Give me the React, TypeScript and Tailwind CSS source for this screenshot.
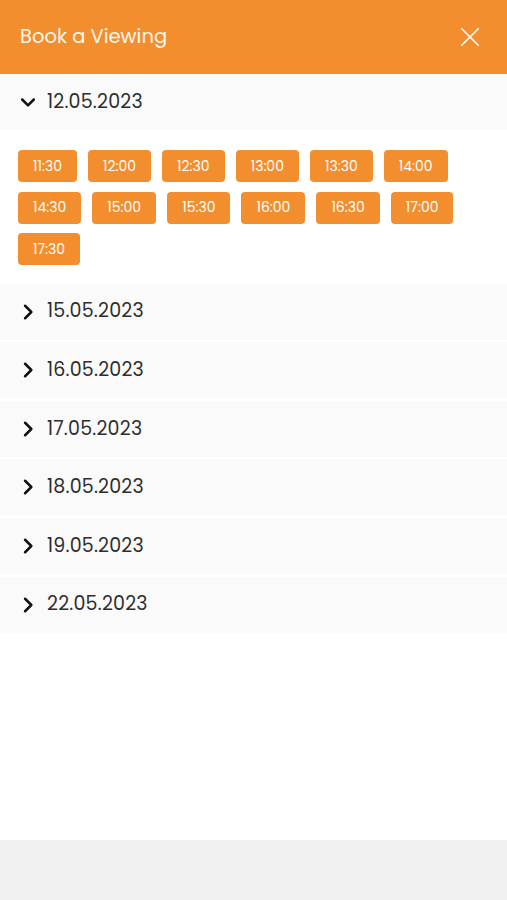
import React, { useState } from 'react';

const times = ['11:30', '12:00', '12:30', '13:00', '13:30', '14:00', '14:30', '15:00', '15:30', '16:00', '16:30', '17:00', '17:30'];
const dates = ['12.05.2023', '15.05.2023', '16.05.2023', '17.05.2023', '18.05.2023', '19.05.2023', '22.05.2023'];

const Chevron: React.FC<{ open: boolean }> = ({ open }) => (
  <svg width="20" height="20" viewBox="0 0 24 24" fill="none" stroke="#111" strokeWidth="3" strokeLinecap="round" strokeLinejoin="round">
    {open ? <path d="M5 9l7 7 7-7" /> : <path d="M8.5 4.5l7.5 7.5-7.5 7.5" />}
  </svg>
);

export default function App() {
  const [open, setOpen] = useState(0);

  return (
    <div className="h-[900px] w-full flex flex-col bg-white font-['Poppins','Open_Sans',sans-serif]">
      <div className="h-[74px] bg-[#f28e2e] flex items-center justify-between pl-5 pr-[26px] shrink-0">
        <span className="text-[#fdf6ee] text-[19.5px]">Book a Viewing</span>
        <svg width="22" height="22" viewBox="0 0 24 24" fill="none" stroke="#fff" strokeWidth="1.8" strokeLinecap="round">
          <path d="M3 3l18 18M21 3L3 21" />
        </svg>
      </div>

      <div className="flex-1 flex flex-col gap-[2.6px]">
        {dates.map((d, i) => (
          <div key={d}>
            <button
              onClick={() => setOpen(open === i ? -1 : i)}
              className="w-full h-[56px] bg-[#fafafa] flex items-center gap-[9px] pl-[18px] text-left"
            >
              <Chevron open={open === i} />
              <span className="text-[19px] text-[#2e2e2e] tracking-[0.2px]">{d}</span>
            </button>
            {open === i && (
              <div className="bg-white px-[18px] pt-5 pb-4 flex flex-wrap gap-x-[11px] gap-y-[9.5px] pr-12">
                {times.map(t => (
                  <span key={t} className="h-8 px-[15px] rounded-[4px] bg-[#f28e2e] text-white text-[14px] flex items-center justify-center">
                    {t}
                  </span>
                ))}
              </div>
            )}
          </div>
        ))}
      </div>

      <div className="h-[60px] bg-[#f1f1f1] shrink-0" />
    </div>
  );
}
